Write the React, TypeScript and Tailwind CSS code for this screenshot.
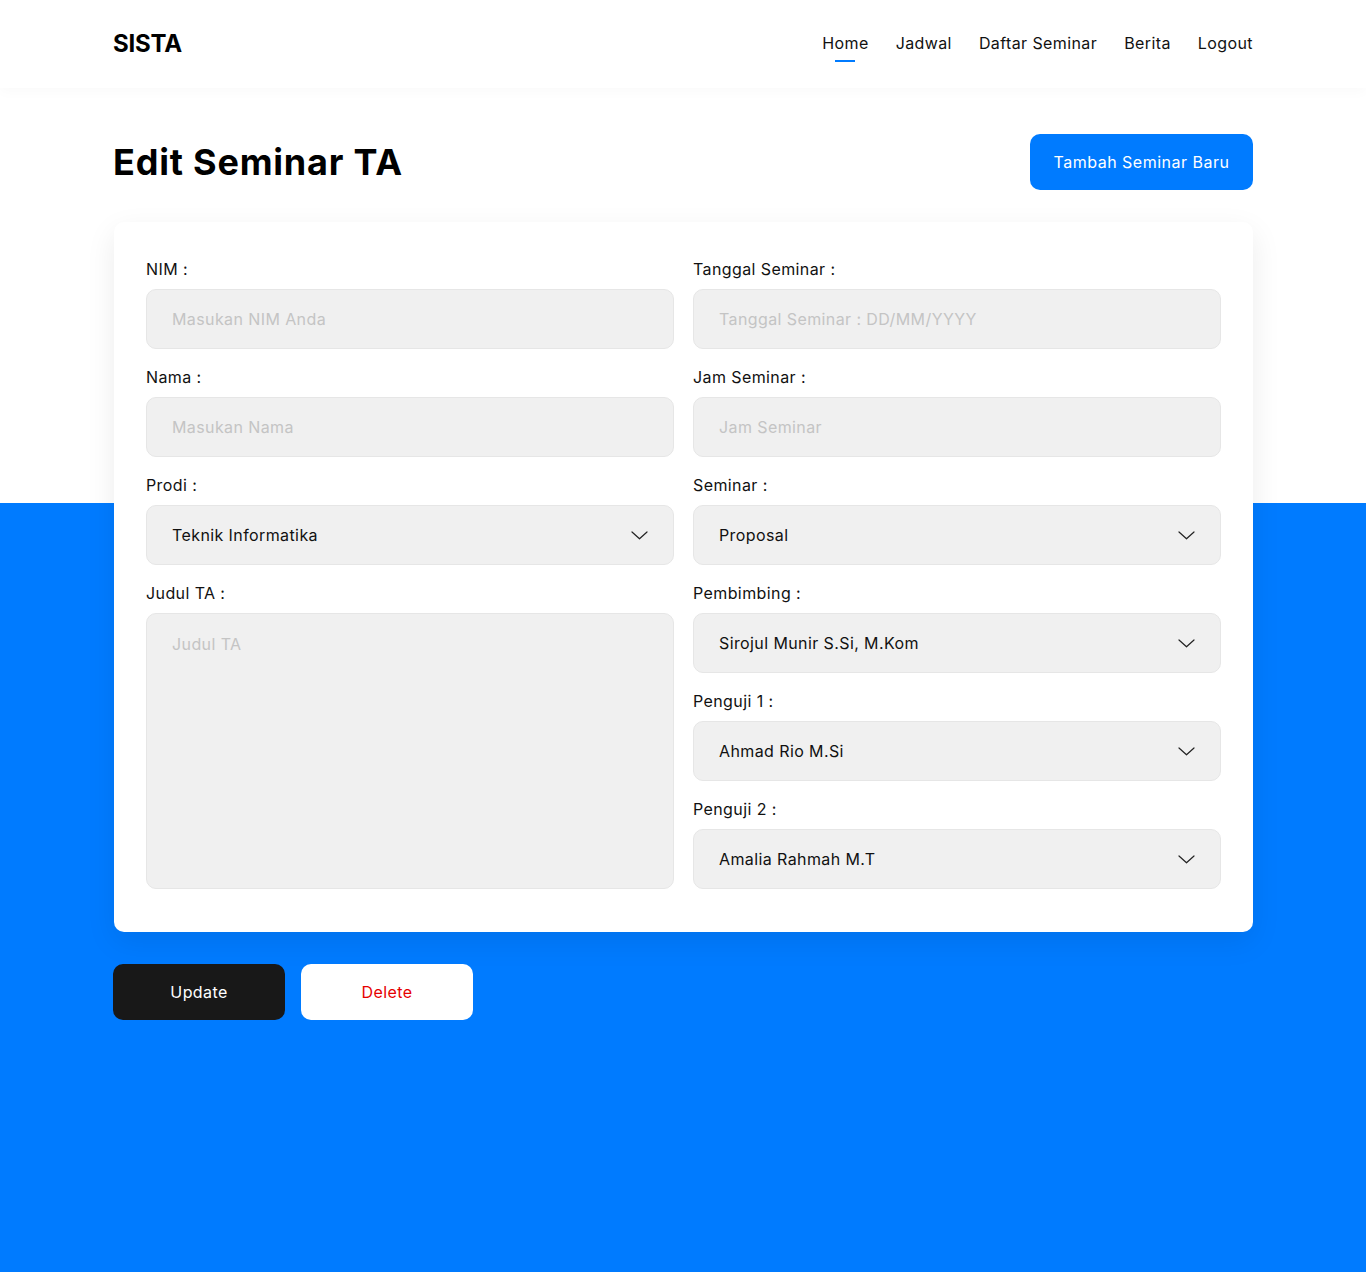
import React from "react";

const Chevron = () => (
  <svg width="17" height="9" viewBox="0 0 17 9" fill="none" className="shrink-0">
    <path d="M1 1L8.5 7.8L16 1" stroke="#222" strokeWidth="1.2" strokeLinecap="round" strokeLinejoin="round" />
  </svg>
);

const Label = ({ children }: { children: React.ReactNode }) => (
  <div className="text-[16px] leading-[24px] text-[#111] mb-2">{children}</div>
);

const Input = ({ placeholder }: { placeholder: string }) => (
  <div className="h-[60px] rounded-[10px] bg-[#f0f0f0] border border-[#e6e6e6] flex items-center pl-[25px] text-[16px] text-[#c4c4c4]">
    {placeholder}
  </div>
);

const Select = ({ value }: { value: string }) => (
  <div className="h-[60px] rounded-[10px] bg-[#f0f0f0] border border-[#e6e6e6] flex items-center justify-between pl-[25px] pr-[25px] text-[16px] text-[#111]">
    <span>{value}</span>
    <Chevron />
  </div>
);

const Group = ({ label, children, last }: { label: string; children: React.ReactNode; last?: boolean }) => (
  <div className={last ? "" : "mb-4"}>
    <Label>{label}</Label>
    {children}
  </div>
);

export default function App() {
  const font = { fontFamily: "Inter, 'Noto Sans', sans-serif" };
  return (
    <div style={font} className="min-h-[1272px] flex flex-col bg-white tracking-[0.4px]">
      <header className="h-[88px] bg-white shadow-[0_4px_12px_rgba(0,0,0,0.025)] relative z-10">
        <div className="w-[1140px] mx-auto h-full flex items-center justify-between">
          <div className="text-[24px] font-bold tracking-[-0.2px] text-black">SISTA</div>
          <nav className="flex items-center gap-[27px] text-[16px] text-[#111] -mt-[2px]">
            <div className="relative">
              Home
              <div className="absolute left-1/2 -translate-x-1/2 top-[29px] w-[20px] h-[2px] bg-[#007bff]" />
            </div>
            <div>Jadwal</div>
            <div>Daftar Seminar</div>
            <div>Berita</div>
            <div>Logout</div>
          </nav>
        </div>
      </header>
      <main className="flex-1 bg-[linear-gradient(to_bottom,#ffffff_415px,#007bff_415px)]">
        <div className="w-[1140px] mx-auto pt-[46px] pb-[60px]">
          <div className="flex items-center justify-between">
            <h1 className="text-[36px] font-bold text-black leading-[56px] tracking-[0.8px]">Edit Seminar TA</h1>
            <button className="h-[56px] w-[223px] rounded-[10px] bg-[#007bff] text-white text-[16px] tracking-[0.5px]">
              Tambah Seminar Baru
            </button>
          </div>
          <div className="mt-[32px] ml-px bg-white rounded-[10px] shadow-[0_10px_30px_rgba(0,0,0,0.08)] px-[32px] pt-[35px] pb-[43px] grid grid-cols-2 gap-x-[19px]">
            <div className="flex flex-col">
              <Group label="NIM :">
                <Input placeholder="Masukan NIM Anda" />
              </Group>
              <Group label="Nama :">
                <Input placeholder="Masukan Nama" />
              </Group>
              <Group label="Prodi :">
                <Select value="Teknik Informatika" />
              </Group>
              <div className="flex-1 flex flex-col">
                <Label>Judul TA :</Label>
                <div className="flex-1 rounded-[10px] bg-[#f0f0f0] border border-[#e6e6e6] pl-[25px] pt-[18px] text-[16px] text-[#c4c4c4]">
                  Judul TA
                </div>
              </div>
            </div>
            <div className="flex flex-col">
              <Group label="Tanggal Seminar :">
                <Input placeholder="Tanggal Seminar : DD/MM/YYYY" />
              </Group>
              <Group label="Jam Seminar :">
                <Input placeholder="Jam Seminar" />
              </Group>
              <Group label="Seminar :">
                <Select value="Proposal" />
              </Group>
              <Group label="Pembimbing :">
                <Select value="Sirojul Munir S.Si, M.Kom" />
              </Group>
              <Group label="Penguji 1 :">
                <Select value="Ahmad Rio M.Si" />
              </Group>
              <Group label="Penguji 2 :" last>
                <Select value="Amalia Rahmah M.T" />
              </Group>
            </div>
          </div>
          <div className="mt-[32px] flex gap-4">
            <button className="h-[56px] w-[172px] rounded-[10px] bg-[#181818] text-white text-[16px] tracking-[0.4px]">Update</button>
            <button className="h-[56px] w-[172px] rounded-[10px] bg-white text-[#e60000] text-[16px] tracking-[0.4px]">Delete</button>
          </div>
        </div>
      </main>
    </div>
  );
}
